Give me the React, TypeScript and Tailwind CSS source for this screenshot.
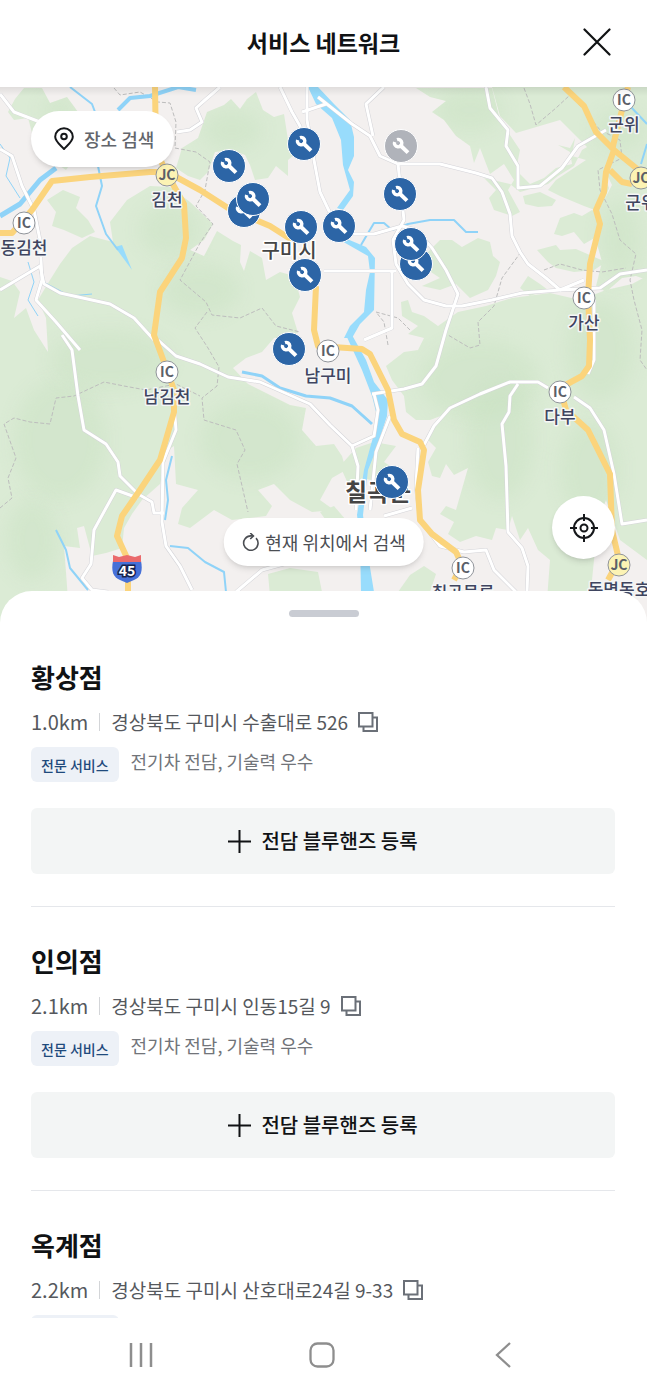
type Pin = { x: number; y: number; closed?: boolean };
type Junction = { x: number; y: number; kind: "IC" | "JC"; name: string };
type Shop = { name: string; distance: string; address: string };

const MAP_WIDTH = 647;
const MAP_TOP = 87;

const pins: Pin[] = [
  { x: 304, y: 144 },
  { x: 401, y: 146, closed: true },
  { x: 229, y: 166 },
  { x: 400, y: 194 },
  { x: 244, y: 211 },
  { x: 253, y: 199 },
  { x: 301, y: 227 },
  { x: 339, y: 226 },
  { x: 416, y: 264 },
  { x: 411, y: 244 },
  { x: 305, y: 275 },
  { x: 289, y: 349 },
  { x: 392, y: 482 },
];

const junctions: Junction[] = [
  { x: 624, y: 100, kind: "IC", name: "군위" },
  { x: 641, y: 178, kind: "JC", name: "군위" },
  { x: 167, y: 175, kind: "JC", name: "김천" },
  { x: 24, y: 223, kind: "IC", name: "동김천" },
  { x: 584, y: 298, kind: "IC", name: "가산" },
  { x: 328, y: 351, kind: "IC", name: "남구미" },
  { x: 167, y: 372, kind: "IC", name: "남김천" },
  { x: 560, y: 392, kind: "IC", name: "다부" },
  { x: 463, y: 568, kind: "IC", name: "칠곡물류" },
  { x: 619, y: 565, kind: "JC", name: "동명동호" },
];

const shops: Shop[] = [
  { name: "황상점", distance: "1.0km", address: "경상북도 구미시 수출대로 526" },
  { name: "인의점", distance: "2.1km", address: "경상북도 구미시 인동15길 9" },
  { name: "옥계점", distance: "2.2km", address: "경상북도 구미시 산호대로24길 9-33" },
];

const forests = [
  "M8 112L15 99L24 88L42 88L50 103L67 97L78 112L66 120L60 132L80 150L66 170L48 158L34 140L28 118L14 120Z",
  "M176 168L182 148L198 138L207 112L224 105L231 99L240 109L247 99L256 92L263 110L274 117L284 114L288 140L294 155L288 160L288 176L276 166L268 178L255 180L250 165L245 155L232 150L215 152L208 172L200 180L188 176Z",
  "M47 200L63 190L80 197L76 208L88 220L95 232L82 238L64 230L52 226L56 212Z",
  "M0 277L12 281L20 292L14 318L26 308L34 330L48 352L46 318L38 300L50 280L60 264L72 248L90 236L113 242L110 222L127 200L150 186L170 187L190 202L213 224L204 240L190 250L204 256L217 231L233 241L241 245L240 262L244 271L250 251L262 258L266 280L280 272L294 276L300 297L292 313L298 333L274 338L262 352L246 358L233 368L248 384L272 396L290 405L306 408L302 430L316 446L334 444L342 456L346 470L332 478L320 500L334 510L312 512L290 500L274 484L258 490L272 506L266 516L232 520L214 510L190 528L178 524L182 508L198 490L176 484L174 446L168 450L160 484L142 500L132 514L124 528L122 548L106 553L92 556L84 526L77 528L80 548L64 546L66 572L68 600L66 623L0 623Z",
  "M416 88L430 97L446 101L432 112L444 120L456 136L470 146L474 163L480 148L490 174L504 164L514 180L508 190L520 212L512 216L494 210L489 198L496 190L484 178L510 184L520 192L548 184L558 176L574 166L582 150L597 141L608 150L604 174L609 188L600 212L584 206L560 196L548 190L556 180L586 160L572 156L575 138L570 148L558 145L570 152L572 164L556 168L544 178L530 184L516 170L520 150L500 120L492 88Z",
  "M492 87H647V280L636 276L622 278L606 292L596 286L602 262L596 240L598 212L612 185L600 160L590 150L560 120L516 133L500 116Z",
  "M523 196L540 192L556 200L552 206L538 207L525 204Z",
  "M554 234L560 218L574 213L582 216L592 210L600 214L598 236L584 244L574 232L562 236Z",
  "M537 250L556 245L560 250L576 249L592 256L606 262L594 270L574 272L556 268L548 262Z",
  "M424 256L440 240L452 240L462 247L478 238L490 242L493 256L500 262L496 276L488 290L470 298L456 284L440 290L422 286L440 278L428 270Z",
  "M520 288L528 276L540 284L548 290L530 296Z",
  "M401 302L408 300L412 312L424 316L438 326L458 312L486 306L512 298L550 293L580 300L606 290L632 284L647 276V560L620 540L606 500L598 520L590 600L547 600L550 560L538 550L528 528L520 540L512 516L508 530L496 528L492 540L476 536L460 542L448 534L454 522L440 514L446 506L456 510L468 468L454 475L446 464L440 478L432 476L428 462L436 448L428 440L434 426L446 414L430 420L416 420L406 412L404 396L392 380L386 366L404 352L418 350L424 338L408 334L418 326L402 316Z",
  "M340 466L356 448L374 442L396 446L384 462L396 470L380 482L362 478L350 488Z",
  "M320 512L334 506L346 520L330 526Z",
  "M268 574L290 568L318 572L322 592L270 596Z",
  "M398 592L410 575L424 566L436 574L430 592Z",
];

const shades = [
  [60, 440, 46, 60], [200, 290, 40, 26], [250, 440, 50, 40], [110, 360, 60, 30], [32, 540, 26, 40],
  [480, 380, 60, 40], [600, 350, 34, 50], [500, 440, 34, 60], [590, 470, 30, 50], [470, 110, 34, 22],
  [620, 240, 20, 40], [232, 130, 30, 20], [170, 230, 30, 26], [60, 110, 18, 14], [620, 130, 26, 20],
];

const boundaries = [
  "M114 88L120 95L140 92L158 102L170 103L176 122L175 148L196 152L210 162L205 190L196 206L213 224L200 243L180 280L206 302L212 315L240 318L262 308L276 326L300 332",
  "M207 312L195 328L208 348L219 367L217 386L202 398L204 420L236 430L245 450L237 464L248 512",
  "M0 508L12 498L8 478L16 458L4 424L14 418L30 422L50 424L56 398L74 396L104 382L124 386L146 390L176 384L200 396",
  "M524 88L530 104L536 125L556 108L570 95L584 110L600 130L620 140L622 158L598 170L600 190L612 214L620 240L636 254L630 280L634 300L642 330L640 360L647 370",
  "M521 252L502 278L494 306L478 322L480 345L470 348L448 335",
  "M544 270L560 264L582 270L602 272L626 268",
  "M388 345L384 322L376 312L398 318L410 330",
];

const minorRoads = [
  "M0 94L14 112L40 122",
  "M220 87L205 100L196 108L202 122L190 130L177 132",
  "M0 149L12 156L22 186L34 210L40 240L42 280L36 300L56 322L80 350",
  "M0 290L40 266L44 284L60 293L110 304L134 318L154 340",
  "M62 335L72 350L78 396L84 430L106 444L118 462L120 476L138 494L152 502L154 513H164",
  "M174 405L176 430L163 462L162 522L166 546L180 566L192 590",
  "M158 340L176 356L200 364L228 377L260 382L310 404L330 425L352 446L358 466L356 510",
  "M138 498L116 490L106 508L94 530L91 564L82 578L92 590L108 592",
  "M280 87L292 112L300 126L303 142M307 87V120L314 160L320 192L330 213L352 234L374 234L402 226L416 230L432 248L446 270L458 294L446 330L436 366L422 384L404 389L372 394",
  "M318 97L352 124L370 136L380 156L398 164L440 164L476 173L492 178L502 192L510 214L512 236L520 252L528 264L546 278L560 290",
  "M384 87L366 104L373 136",
  "M302 112L326 104",
  "M398 164L404 220L393 240L396 264L408 284L424 300L446 306L462 306L492 300L522 293L560 290L584 280",
  "M324 271H396M392 271V328L364 340",
  "M486 87L490 108L508 130L506 146L518 166L518 188L540 186L562 168L578 146L606 130",
  "M560 290L600 288L620 274L647 270",
  "M548 388L538 382H510L480 394L450 408L434 426L424 445M518 384L510 396L509 412L502 424L506 466L508 532L522 548L528 566L527 592",
  "M418 448L416 486L420 520L440 546L464 552L486 550L494 570L516 592",
  "M574 397L590 408L604 430L614 474L622 524L647 520",
  "M374 394L378 410L374 436L352 446M390 416L376 452L370 510",
  "M594 300V360L588 374",
  "M236 592L262 570L284 564",
  "M412 508L384 516",
];

const highways = [
  "M0 233H12L32 210L52 181L90 177L150 172L167 172L200 190L228 208L270 226L292 240",
  "M155 87L156 150L166 172L184 204L186 238L182 258L160 292L154 335L164 362L174 390L174 412L160 460L140 490L122 516L117 536L128 560V592",
  "M316 286L314 330L318 346L362 349L370 354L388 390L394 420L402 434L420 442L424 450L418 490L420 520L432 534L456 552L462 565L454 580",
  "M564 87L584 106L596 132L614 150L641 172M614 150L606 172L604 192L596 210L600 224L590 264L588 296L590 340L589 366L582 376L560 388L566 410L588 430L610 474L612 530L619 560L608 580",
  "M628 87L622 110L612 150M610 170L622 182L632 184",
];

function Junctions() {
  return (
    <>
      {junctions.map((j) => (
        <g key={`${j.x}-${j.y}`} textAnchor="middle">
          <circle
            cx={j.x}
            cy={j.y}
            r="11"
            fill={j.kind === "JC" ? "#fcf3b4" : "#ffffff"}
            stroke="#90949a"
          />
          <text x={j.x} y={j.y + 5} fontSize="14" fontWeight="700" fill="#5b6068">
            {j.kind}
          </text>
          <text
            x={j.x}
            y={j.y + 31}
            fontSize="17"
            fontWeight="500"
            fill="#3f4560"
            stroke="#f4f6f6"
            strokeWidth="3"
            strokeLinejoin="round"
            paintOrder="stroke"
          >
            {j.name}
          </text>
        </g>
      ))}
    </>
  );
}

function MapDrawing() {
  return (
    <svg
      viewBox="0 87 647 536"
      preserveAspectRatio="none"
      className="absolute inset-0 h-full w-full"
      aria-hidden="true"
    >
      <defs>
        <filter id="soft" x="-50%" y="-50%" width="200%" height="200%">
          <feGaussianBlur stdDeviation="9" />
        </filter>
        <clipPath id="forest">
          {forests.map((d) => (
            <path key={d} d={d} />
          ))}
        </clipPath>
        <linearGradient id="top-shade" x1="0" y1="0" x2="0" y2="1">
          <stop offset="0" stopColor="#000" stopOpacity="0.08" />
          <stop offset="1" stopColor="#000" stopOpacity="0" />
        </linearGradient>
      </defs>
      <rect y="87" width="647" height="536" fill="#f3f0ef" />
      <g fill="#dbebd5">
        {forests.map((d) => (
          <path key={d} d={d} />
        ))}
      </g>
      <g clipPath="url(#forest)">
        {shades.map(([cx, cy, rx, ry]) => (
          <ellipse
            key={`${cx}-${cy}`}
            cx={cx}
            cy={cy}
            rx={rx}
            ry={ry}
            fill="#c6e0bf"
            opacity="0.38"
            filter="url(#soft)"
          />
        ))}
      </g>

      <g fill="none" stroke="#bdbdbd" strokeWidth="1" strokeDasharray="4 2">
        {boundaries.map((d) => (
          <path key={d} d={d} />
        ))}
      </g>

      {/* rivers */}
      <g fill="#98dcfc">
        <path d="M308 87H318L334 104L350 120L354 137V156L348 170L354 182L353 196L343 210L337 208L350 190L343 165L341 140L332 118L316 104Z" />
        <path d="M340 236L366 247L375 258L374 310L360 324L352 338H344L350 326L364 312L366 290L370 272L368 256L340 240Z" />
        <path d="M346 335H352L366 360L374 382L388 400L387 416L376 450L368 470L363 515L368 555L374 592H361L360 540L357 515L364 470L370 448L378 420L372 396L362 370Z" />
        <path d="M115 247L122 245L132 270Z" />
      </g>
      <g fill="none" stroke="#8fd3f8" strokeWidth="2" strokeLinejoin="round">
        <path d="M0 216L20 204L40 180L56 168" strokeWidth="5" />
        <path d="M118 110L130 98L150 96L178 87L196 90" strokeWidth="4" />
        <path d="M70 87L92 104L98 120M98 166L102 186L96 206L106 234L118 250" />
        <path d="M0 144L10 158L6 176L20 198M28 262L34 282L28 300L38 316M40 280L70 296L92 294" strokeWidth="1" />
        <path d="M242 372L262 376L280 388L306 396L330 398L352 406L372 424" strokeWidth="3" />
        <path d="M56 530L66 550L70 568L88 590" />
        <path d="M172 456L166 480L168 500L165 520" />
        <path d="M170 546L188 548L205 562L224 572L226 592" />
        <path d="M361 245L374 223H384L392 230L408 224L430 220L454 220L466 232L478 232" />
        <path d="M630 106L647 124M641 164L647 144" />
      </g>

      <g fill="none" stroke="#d4d4d8" strokeWidth="4" strokeLinejoin="round">
        {minorRoads.map((d) => (
          <path key={d} d={d} />
        ))}
      </g>
      <g fill="none" stroke="#ffffff" strokeWidth="3" strokeLinejoin="round">
        {minorRoads.map((d) => (
          <path key={d} d={d} />
        ))}
      </g>
      <g fill="none" stroke="#fbd47c" strokeWidth="6" strokeLinejoin="round">
        {highways.map((d) => (
          <path key={d} d={d} />
        ))}
      </g>

      <Junctions />

      <g
        textAnchor="middle"
        fill="#454545"
        stroke="#ffffff"
        strokeWidth="3"
        strokeLinejoin="round"
        paintOrder="stroke"
      >
        <text x="289" y="258" fontSize="20" fontWeight="500">
          구미시
        </text>
        <text x="378" y="501" fontSize="24" fontWeight="700">
          칠곡군
        </text>
      </g>

      {/* route 45 shield */}
      <g>
        <path
          d="M113 561H141C143 571 141 577 134 580L127 583L120 580C113 577 111 571 113 561Z"
          fill="#4570d8"
        />
        <path d="M113 555L119 557L127 555L135 557L141 555V562H113Z" fill="#ea6a6c" />
        <text
          x="127"
          y="576"
          textAnchor="middle"
          fontSize="14"
          fontWeight="700"
          fill="#ffffff"
          stroke="#16224c"
          strokeWidth="3"
          paintOrder="stroke"
        >
          45
        </text>
      </g>
      <rect y="87" width="647" height="9" fill="url(#top-shade)" />
    </svg>
  );
}

function WrenchIcon() {
  return (
    <svg width="18" height="18" viewBox="0 0 18 18" fill="none" stroke="currentColor">
      <path d="M5 2.600A3.700 3.700 0 1 1 2.600 5" strokeWidth="3.400" />
      <path d="M7.500 7.500L16 15.600" strokeWidth="4" />
    </svg>
  );
}

function PlaceIcon() {
  return (
    <svg width="20" height="24" viewBox="0 0 20 24" fill="none" stroke="#15171a" strokeWidth="2">
      <path
        d="M10 22C7 18.500 1.200 14.500 1.200 9.700A8.800 8.500 0 0 1 18.800 9.700C18.800 14.500 13 18.500 10 22Z"
        strokeLinejoin="round"
      />
      <circle cx="10" cy="9.500" r="2.800" />
    </svg>
  );
}

function ReloadIcon() {
  return (
    <svg width="18" height="18" viewBox="0 0 18 18" fill="none" stroke="#4b4e53" strokeWidth="1.600">
      <path d="M14.300 5.100A7.200 7.200 0 1 1 9 2.900H11.500" />
      <path d="M8.500 0L11.700 2.900L8.500 6" />
    </svg>
  );
}

function TargetIcon() {
  return (
    <svg width="30" height="30" viewBox="0 0 30 30" fill="none" stroke="#15171a" strokeWidth="2">
      <circle cx="15" cy="15" r="10" />
      <circle cx="15" cy="15" r="3.500" />
      <path d="M15 1V8M15 22V29M1 15H8M22 15H29" />
    </svg>
  );
}

function CopyIcon() {
  return (
    <svg width="20" height="20" viewBox="0 0 20 20" fill="none" stroke="#6b7078" strokeWidth="2">
      <path d="M1 1H14.500V14.500H1Z" />
      <path d="M14.500 5.500H19V19H5.500V14.500" />
    </svg>
  );
}

function ShopItem({ shop }: { shop: Shop }) {
  return (
    <li className="border-b border-gray-200 pt-9 pb-8">
      <h2 className="text-[26px] leading-9 font-bold text-[#101214]">{shop.name}</h2>
      <div className="mt-[13px] flex h-7 items-center text-[19px] text-[#55585d]">
        <span className="text-xl">{shop.distance}</span>
        <span className="mx-[11px] h-[18px] w-px bg-[#d3d5d8]" />
        <span>{shop.address}</span>
        <button type="button" aria-label="주소 복사" className="ml-2.5">
          <CopyIcon />
        </button>
      </div>
      <div className="mt-[11px] flex items-start gap-3">
        <span className="flex h-[35px] items-center rounded-md bg-[#edf1f7] px-2.5 text-sm font-medium text-[#1f4a7c]">
          전문 서비스
        </span>
        <span className="text-lg leading-7 text-[#717479]">전기차 전담, 기술력 우수</span>
      </div>
      <button
        type="button"
        className="mt-[26px] flex h-[66px] w-full items-center justify-center gap-2.5 rounded-md bg-[#f3f5f5] text-xl font-medium text-[#101214]"
      >
        <svg width="23" height="23" viewBox="0 0 23 23" stroke="#101214" strokeWidth="2">
          <path d="M11.500 0V23M0 11.500H23" />
        </svg>
        전담 블루핸즈 등록
      </button>
    </li>
  );
}

export default function App() {
  return (
    <div className="flex h-screen flex-col overflow-hidden bg-white font-['Noto_Sans_CJK_KR',sans-serif]">
      <header className="relative flex h-[87px] shrink-0 items-center justify-center pb-[3px]">
        <h1 className="text-[23px] font-bold text-[#101214]">서비스 네트워크</h1>
        <button type="button" aria-label="닫기" className="absolute right-9">
          <svg width="28" height="28" viewBox="0 0 28 28" stroke="#101214" strokeWidth="2.200">
            <path d="M1.500 1.500L26.500 26.500M26.500 1.500L1.500 26.500" strokeLinecap="round" />
          </svg>
        </button>
      </header>

      <section className="relative h-[536px] shrink-0 overflow-hidden">
        <MapDrawing />
        {pins.map((pin) => (
          <button
            key={`${pin.x}-${pin.y}`}
            type="button"
            aria-label="서비스 지점"
            className={`absolute flex size-[34px] -translate-1/2 items-center justify-center rounded-full border border-white text-white ${
              pin.closed ? "bg-[#b0b3ba]" : "bg-[#2c65a6]"
            }`}
            style={{ left: `${(pin.x / MAP_WIDTH) * 100}%`, top: pin.y - MAP_TOP }}
          >
            <WrenchIcon />
          </button>
        ))}
        <button
          type="button"
          className="absolute top-6 left-[31px] flex h-14 items-center gap-2.5 rounded-full bg-white pr-5 pl-[23px] text-lg font-medium text-[#63666c] shadow-md"
        >
          <PlaceIcon />
          장소 검색
        </button>
        <button
          type="button"
          className="absolute bottom-[57px] left-1/2 flex h-12 -translate-x-1/2 items-center gap-1.5 rounded-full bg-white px-[18px] text-lg whitespace-nowrap text-[#4b4e53] shadow-md"
        >
          <ReloadIcon />
          현재 위치에서 검색
        </button>
        <button
          type="button"
          aria-label="내 위치"
          className="absolute right-8 bottom-16 flex size-[63px] items-center justify-center rounded-full bg-white shadow-md"
        >
          <TargetIcon />
        </button>
      </section>

      <main className="relative -mt-8 flex min-h-0 flex-1 flex-col rounded-t-[32px] bg-white">
        <div className="mx-auto mt-[19px] h-[7px] w-[70px] shrink-0 rounded-full bg-[#c9ccd3]" />
        <ul className="mt-1.5 min-h-0 flex-1 overflow-y-auto pr-8 pl-[31px] [scrollbar-width:none]">
          {shops.map((shop) => (
            <ShopItem key={shop.name} shop={shop} />
          ))}
        </ul>
      </main>

      <nav className="flex h-[74px] shrink-0 items-center justify-around bg-white pr-[54px] pl-[50px]">
        <button type="button" aria-label="최근 앱">
          <svg width="26" height="26" viewBox="0 0 26 26" stroke="#8e8e8e" strokeWidth="2.500">
            <path d="M3 1V25M13 1V25M23 1V25" />
          </svg>
        </button>
        <button type="button" aria-label="홈">
          <svg width="26" height="26" viewBox="0 0 26 26" fill="none" stroke="#8e8e8e" strokeWidth="2.300">
            <rect x="1.500" y="1.500" width="23" height="23" rx="7" />
          </svg>
        </button>
        <button type="button" aria-label="뒤로">
          <svg width="26" height="26" viewBox="0 0 26 26" fill="none" stroke="#8e8e8e" strokeWidth="2.300">
            <path d="M20 1L7 13L20 25" />
          </svg>
        </button>
      </nav>
    </div>
  );
}
